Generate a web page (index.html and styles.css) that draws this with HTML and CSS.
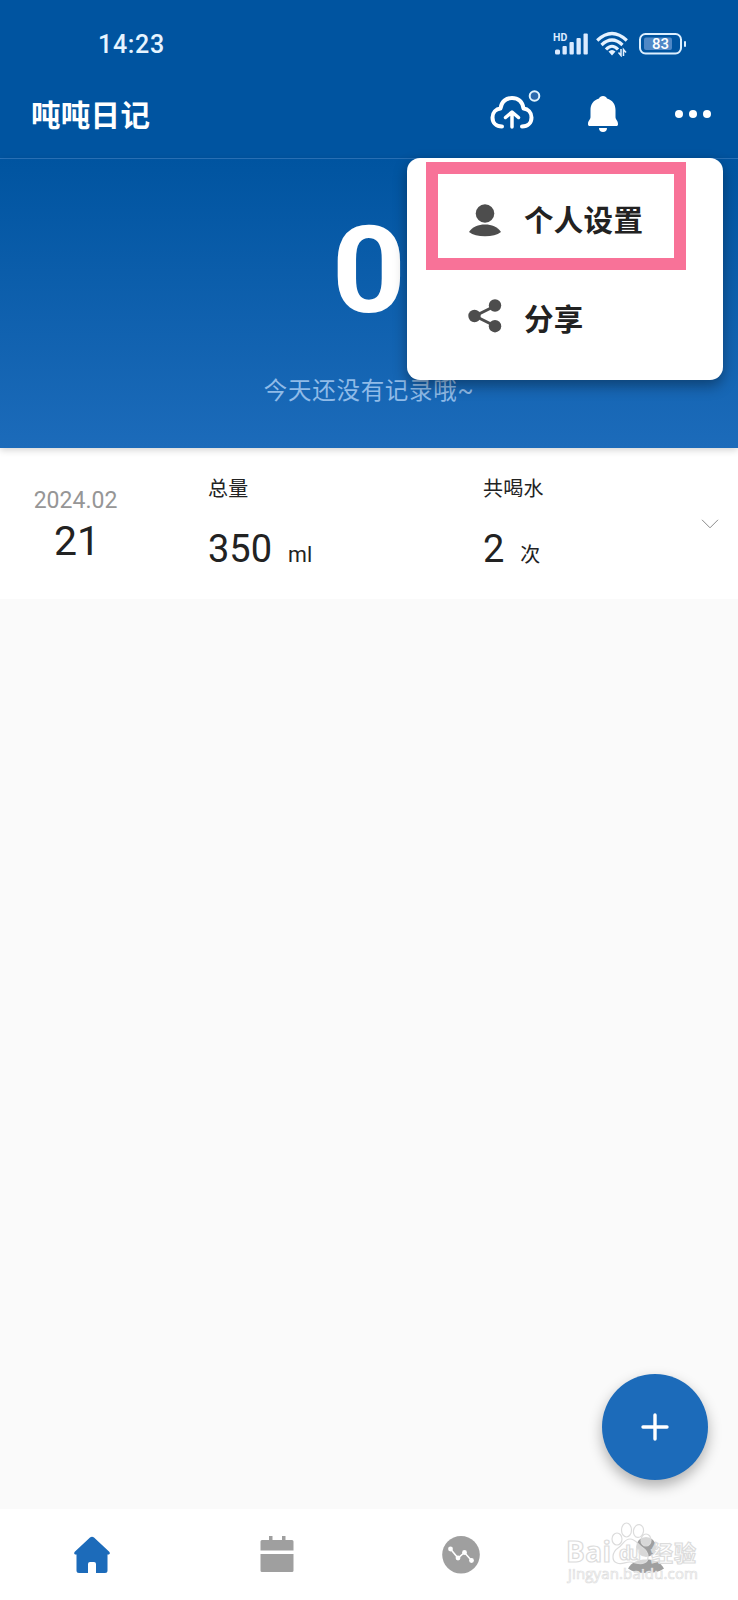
FILE: index.html
```
<!DOCTYPE html>
<html lang="zh-CN">
<head>
    <meta charset="UTF-8">
    <meta name="viewport" content="width=device-width, initial-scale=1.0">
    <title>吨吨日记</title>
    <link rel="stylesheet" href="styles.css">
</head>
<body>
    <div class="status-bar">
        <span class="time">14:23</span>
        <div class="status-icons">
            <svg width="36" height="26" viewBox="0 0 36 26">
                <text x="0" y="9.500" class="hd">HD</text>
                <g fill="#dcebff">
                    <rect x="2" y="18.500" width="5" height="5" rx="1.500"/>
                    <rect x="9.500" y="15" width="4.300" height="8.500" rx="1"/>
                    <rect x="16.500" y="11" width="4.300" height="12.500" rx="1"/>
                    <rect x="23.500" y="7" width="4.300" height="16.500" rx="1"/>
                    <rect x="30.500" y="2.500" width="4.300" height="21" rx="1"/>
                </g>
            </svg>
            <svg class="wifi" width="32" height="26" viewBox="0 0 32 26">
                <g fill="none" stroke="#e6f2ff" stroke-width="3.200">
                    <path d="M1.200 9.500Q16 -4.500 30.800 9.500"/>
                    <path d="M5.500 14Q16 4 26.500 14"/>
                    <path d="M10 18.500Q16 12 22 18.500"/>
                </g>
                <path d="M12.500 20.500Q16 17.500 19.500 20.500L16 24.500Z" fill="#e6f2ff"/>
                <path d="M25 18V24.500L22.500 21.500M27.500 25V18.500L30 21.500" fill="none" stroke="#e6f2ff" stroke-width="1.500"/>
            </svg>
            <svg class="battery" width="48" height="22" viewBox="0 0 48 22">
                <rect x="1" y="1" width="41" height="19.500" rx="5.500" fill="none" stroke="#dcefff" stroke-width="2"/>
                <rect x="5" y="4.500" width="28" height="12.500" rx="2" fill="#4f88c6"/>
                <rect x="45" y="8" width="2" height="6" rx="1" fill="#dcefff"/>
                <text x="21.500" y="16.200" class="level">83</text>
            </svg>
        </div>
    </div>

    <header>
        <h1>吨吨日记</h1>
        <div class="actions">
            <svg width="54" height="52" viewBox="0 0 54 52">
                <g fill="none" stroke="#fff" stroke-width="4" stroke-linecap="round" stroke-linejoin="round">
                    <path d="M14 38.500C8 38.500 4.500 34.500 4.500 29.500C4.500 24.500 8 21 12.500 20.500C13.500 13.500 18 10 24 10C30 10 34.500 13.500 35.500 20.500C40 21 43.500 24.500 43.500 29.500C43.500 34.500 40 38.500 34 38.500"/>
                    <path d="M24 39V25M17.500 29.500L24 24L30.500 29.500" stroke-width="3.500"/>
                </g>
                <circle cx="46.500" cy="8" r="4.800" fill="#2c6aad" stroke="#e2f5ff" stroke-width="2"/>
            </svg>
            <svg class="bell" width="34" height="38" viewBox="0 0 34 38">
                <path d="M17 1C19 1 20.500 2 21 3.500C26.500 5 29.500 9.500 29.500 15V22C29.500 25 32 25.500 32 29C32 30.500 31.500 31 30 31H4C2.500 31 2 30.500 2 29C2 25.500 4.500 25 4.500 22V15C4.500 9.500 7.500 5 13 3.500C13.500 2 15 1 17 1Z" fill="#fff"/>
                <path d="M13 33H21C21 35.500 19.500 37 17 37C14.500 37 13 35.500 13 33Z" fill="#fff"/>
            </svg>
            <svg class="more" width="36" height="8" viewBox="0 0 36 8">
                <g fill="#fff">
                    <circle cx="4" cy="4" r="4"/>
                    <circle cx="18" cy="4" r="4"/>
                    <circle cx="32" cy="4" r="4"/>
                </g>
            </svg>
        </div>
    </header>

    <div class="menu">
        <div class="menu-item">
            <svg width="34" height="34" viewBox="0 0 34 34">
                <circle cx="17" cy="10.500" r="9.300" fill="#4d4d4d"/>
                <path d="M1 29C5 23.500 10 21.500 17 21.500C24 21.500 29 23.500 33 29C29 32 24 33.300 17 33.300C10 33.300 5 32 1 29Z" fill="#4d4d4d"/>
            </svg>
            <span>个人设置</span>
        </div>
        <div class="menu-item share">
            <svg width="34" height="34" viewBox="0 0 34 34">
                <path d="M27 7L7 17L27 27" fill="none" stroke="#4d4d4d" stroke-width="3"/>
                <g fill="#4d4d4d">
                    <circle cx="27" cy="6.500" r="6.200"/>
                    <circle cx="6.500" cy="17" r="6.200"/>
                    <circle cx="27" cy="27.200" r="6.200"/>
                </g>
            </svg>
            <span>分享</span>
        </div>
        <div class="highlight"></div>
    </div>

    <div class="today">
        <div class="total">0</div>
        <p>今天还没有记录哦~</p>
    </div>

    <div class="record">
        <div class="date">
            <span class="month">2024.02</span>
            <span class="day">21</span>
        </div>
        <div class="amount">
            <span class="label">总量</span>
            <div class="value">350<small>ml</small></div>
        </div>
        <div class="count">
            <span class="label">共喝水</span>
            <div class="value">2<small>次</small></div>
        </div>
        <svg width="18" height="10" viewBox="0 0 18 10">
            <path d="M1 0.800L9 8.800L17 0.800" fill="none" stroke="#8a8a8a" stroke-width="1"/>
        </svg>
    </div>

    <main></main>

    <button class="add">
        <svg width="28" height="28" viewBox="0 0 28 28">
            <path d="M14 2V26M2 14H26" stroke="#fff" stroke-width="3.400" stroke-linecap="round"/>
        </svg>
    </button>

    <nav>
        <a>
            <svg width="38" height="38" viewBox="0 0 38 38">
                <path d="M17 1.500Q19 0 21 1.500L36.500 16Q37.500 17.500 36 18.500H34.500V34.500Q34.500 37 32 37H23V28Q23 26 21 26H17Q15 26 15 28V37H6Q3.500 37 3.500 34.500V18.500H2Q0.500 17.500 1.500 16Z" fill="#1c6bba"/>
            </svg>
        </a>
        <a>
            <svg width="34" height="38" viewBox="0 0 34 38">
                <path d="M2 4H9V0H12.500V4H22V0H25.500V4H32Q33.500 4 33.500 5.500V14.500H0.500V5.500Q0.500 4 2 4ZM0.500 18H33.500V34.500Q33.500 36 32 36H2Q0.500 36 0.500 34.500Z" fill="#9f9f9f"/>
            </svg>
        </a>
        <a>
            <svg width="38" height="38" viewBox="0 0 38 38">
                <circle cx="19" cy="18.800" r="18.800" fill="#9f9f9f"/>
                <path d="M8.500 13L16 22L22.500 16.500L29.500 24.500" fill="none" stroke="#fff" stroke-width="1.600"/>
                <g fill="#fff">
                    <circle cx="8.500" cy="13" r="2.400"/>
                    <circle cx="16" cy="22" r="2.400"/>
                    <circle cx="22.500" cy="16.500" r="2.400"/>
                    <circle cx="29.500" cy="24.500" r="2.400"/>
                </g>
            </svg>
        </a>
        <a>
            <svg width="38" height="38" viewBox="0 0 38 38">
                <circle cx="19" cy="11" r="10" fill="#9f9f9f"/>
                <path d="M1 32.500C5 26 11 23.500 19 23.500C27 23.500 33 26 37 32.500C33 35.500 27 37 19 37C11 37 5 35.500 1 32.500Z" fill="#9f9f9f"/>
            </svg>
        </a>
    </nav>

    <svg class="watermark" width="140" height="72" viewBox="0 0 140 72">
        <g class="outline">
            <path d="M67 23C61 23 60 29 55 32C49 36 48 45 54 47C59 49 62 46 67 46C72 46 76 49 81 47C87 45 86 36 80 32C75 29 73 23 67 23Z"/>
            <ellipse cx="54" cy="23" rx="5" ry="6"/>
            <ellipse cx="63.500" cy="14" rx="5" ry="7"/>
            <ellipse cx="75.500" cy="15" rx="5" ry="6.500" transform="rotate(10 75.500 15)"/>
            <ellipse cx="83" cy="24" rx="5" ry="6"/>
            <text x="3" y="46" font-size="28" textLength="45">Bai</text>
            <text x="56" y="44" font-size="19" textLength="22">du</text>
            <text x="88" y="45" font-size="22" textLength="45">经验</text>
        </g>
        <text x="5" y="63" class="site" textLength="130">jingyan.baidu.com</text>
    </svg>
</body>
</html>
```
FILE: styles.css
```
* {
    box-sizing: border-box;
}
body {
    font-family: Roboto, "Noto Sans CJK SC", sans-serif;
    margin: 0;
    height: 1600px;
    display: flex;
    flex-direction: column;
    position: relative;
    background: #fafafa;
    color: #222;
    overflow: hidden;
}
svg {
    display: block;
    flex: none;
}
.status-bar {
    height: 70px;
    padding: 18px 51px 0 98px;
    display: flex;
    justify-content: space-between;
    align-items: center;
    background: #0054a0;
}
.time {
    padding-top: 1px;
    font-size: 25px;
    font-weight: 500;
    letter-spacing: 0.7px;
    color: #e6f4ff;
}
.status-icons {
    display: flex;
    align-items: center;
}
.wifi {
    margin-left: 7px;
}
.battery {
    margin-left: 11px;
}
.hd {
    font-size: 10.5px;
    font-weight: 700;
    fill: #dcebff;
}
.level {
    font-size: 15px;
    font-weight: 500;
    fill: #fff;
    text-anchor: middle;
}
header {
    height: 89px;
    padding: 0 27px 0 31px;
    display: flex;
    justify-content: space-between;
    align-items: center;
    background: #0054a0;
    border-bottom: 1px solid #2a74bd;
}
h1 {
    margin: 0;
    padding-top: 3px;
    font-size: 29.5px;
    font-weight: 700;
    letter-spacing: 0.3px;
    line-height: 40px;
    color: #fff;
}
.actions {
    display: flex;
    align-items: center;
    margin-top: -1px;
}
.bell {
    margin-left: 44px;
}
.more {
    margin-left: 55px;
}

/* Dropdown menu */
.menu {
    position: absolute;
    top: 158px;
    right: 15px;
    z-index: 2;
    width: 316px;
    height: 222px;
    padding-top: 12px;
    background: #fff;
    border-radius: 13px;
    box-shadow: 0 6px 14px rgba(0, 0, 0, 0.35);
}
.menu-item {
    height: 99px;
    padding-left: 61px;
    display: flex;
    align-items: center;
    font-size: 29.5px;
    font-weight: 700;
    letter-spacing: 0.3px;
}
.menu-item span {
    margin-left: 22px;
    padding-bottom: 3px;
}
.share svg {
    margin-bottom: 5px;
}
.highlight {
    position: absolute;
    top: 4px;
    left: 18.5px;
    width: 260px;
    height: 108px;
    border: 12px solid #f87298;
}

/* Today's total */
.today {
    height: 289px;
    flex: none;
    position: relative;
    text-align: center;
    background: linear-gradient(#0054a0, #1c6bba);
    box-shadow: 0 2px 7px rgba(0, 0, 0, 0.18);
    color: #fff;
}
.total {
    margin-top: 42px;
    font-size: 121px;
    font-weight: 700;
    line-height: 140px;
    transform: scaleX(1.07);
}
.today p {
    margin: 33px 0 0;
    font-size: 23.5px;
    letter-spacing: 0.7px;
    line-height: 34px;
    color: #8fbbe8;
}

/* Daily record */
.record {
    height: 151px;
    flex: none;
    padding-right: 19px;
    display: grid;
    grid-template-columns: 208px 275px 1fr 18px;
    background: #fff;
}
.record > svg {
    margin-top: 71px;
}
.date {
    width: 151px;
    padding-top: 38px;
    display: flex;
    flex-direction: column;
    align-items: center;
}
.month {
    font-size: 23px;
    line-height: 30px;
    color: #969696;
}
.day {
    margin-left: 3px;
    font-size: 41px;
    line-height: 50px;
}
.label {
    display: block;
    margin-top: 26px;
    font-size: 20px;
    letter-spacing: 0.3px;
    line-height: 30px;
}
.value {
    margin-top: 18px;
    font-size: 38px;
    line-height: 54px;
}
.value small {
    margin-left: 16px;
    font-size: 20px;
}
.amount small {
    font-size: 21.5px;
}
main {
    flex: 1;
}

/* Add button */
.add {
    position: absolute;
    right: 30px;
    bottom: 120px;
    width: 106px;
    height: 106px;
    padding: 0;
    display: flex;
    align-items: center;
    justify-content: center;
    background: #1c6bba;
    border: none;
    border-radius: 50%;
    box-shadow: 0 6px 14px rgba(0, 0, 0, 0.3);
}

/* Bottom navigation */
nav {
    height: 91px;
    flex: none;
    display: grid;
    grid-template-columns: repeat(4, 1fr);
    justify-items: center;
    align-items: center;
    background: #fff;
}
.watermark {
    position: absolute;
    right: 35px;
    bottom: 12px;
    font-family: "Open Sans", "Noto Sans CJK SC", sans-serif;
    font-weight: 700;
}
.outline {
    fill: rgba(255, 255, 255, 0.6);
    stroke: #dcdcdc;
    stroke-width: 1.2;
}
.site {
    font-size: 15px;
    font-weight: 400;
    fill: #fff;
    stroke: #dedede;
    stroke-width: 0.7;
}
```
